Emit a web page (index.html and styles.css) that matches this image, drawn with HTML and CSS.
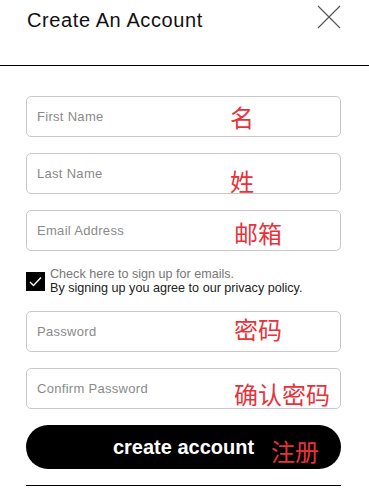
FILE: index.html
```html
<!DOCTYPE html>
<html lang="en">
<head>
<meta charset="UTF-8">
<meta name="viewport" content="width=device-width, initial-scale=1.0">
<title>Create An Account</title>
<link rel="stylesheet" href="styles.css">
</head>
<body>

<div class="header">
    <h1>Create An Account</h1>
    <button class="close" aria-label="Close">
        <svg width="24" height="24" viewBox="0 0 24 24"><path d="M1 1L23 23M23 1L1 23" stroke="#555" stroke-width="1.1" fill="none"/></svg>
    </button>
</div>

<form class="form">
    <div class="field">
        <input type="text" placeholder="First Name">
        <span class="note note-first">名</span>
    </div>
    <div class="field">
        <input type="text" placeholder="Last Name">
        <span class="note note-last">姓</span>
    </div>
    <div class="field">
        <input type="email" placeholder="Email Address">
        <span class="note note-email">邮箱</span>
    </div>
    <label class="optin">
        <span class="box">
            <svg width="13" height="11" viewBox="0 0 13 11"><path d="M1 6L4.5 9.5L12 1.5" stroke="#fff" stroke-width="1.4" fill="none"/></svg>
        </span>
        <span class="optin-text">
            <span class="line1">Check here to sign up for emails.</span>
            <span class="line2">By signing up you agree to our privacy policy.</span>
        </span>
    </label>
    <div class="field">
        <input type="password" placeholder="Password">
        <span class="note note-pass">密码</span>
    </div>
    <div class="field">
        <input type="password" placeholder="Confirm Password">
        <span class="note note-confirm">确认密码</span>
    </div>
    <div class="field">
        <button type="button" class="submit">create account</button>
        <span class="note note-submit">注册</span>
    </div>
    <div class="rule"></div>
</form>

</body>
</html>
```

FILE: styles.css
```css
body {
    margin: 0;
    padding: 0;
    font-family: "Liberation Sans", Arial, sans-serif;
    background-color: #fff;
}
.header {
    display: flex;
    justify-content: space-between;
    align-items: flex-start;
    height: 65px;
    border-bottom: 1px solid #000;
}
.header h1 {
    margin: 0;
    padding: 8px 0 0 27px;
    font-size: 20px;
    line-height: 24px;
    font-weight: normal;
    letter-spacing: 0.6px;
    color: #111;
}
.close {
    margin: 5px 28px 0 0;
    padding: 0;
    border: 0;
    background: none;
    width: 24px;
    height: 24px;
}
.form {
    display: flex;
    flex-direction: column;
    gap: 16px;
    padding: 30px 28px 0 26px;
}
.field {
    position: relative;
}
.field input {
    box-sizing: border-box;
    display: block;
    width: 100%;
    height: 41px;
    padding: 0 10px;
    border: 1px solid #c9c9c9;
    border-radius: 5px;
    font-family: "Liberation Sans", Arial, sans-serif;
    font-size: 13px;
    letter-spacing: 0.3px;
    color: #333;
}
.field input::placeholder {
    color: #8a8a8a;
}
.note {
    position: absolute;
    left: 204px;
    font-family: "Noto Sans CJK SC", sans-serif;
    font-size: 24px;
    line-height: 24px;
    color: #e8323a;
}
.note-first { top: 9px; }
.note-last { top: 16px; }
.note-email { top: 11px; left: 208px; }
.note-pass { top: 6px; left: 208px; }
.note-confirm { top: 14px; left: 208px; }
.note-submit { top: 14px; left: 245px; }
.optin {
    display: flex;
    gap: 5px;
    height: 28px;
}
.box {
    display: flex;
    align-items: center;
    justify-content: center;
    width: 19px;
    height: 19px;
    margin-top: 5px;
    background-color: #000;
}
.optin-text {
    display: flex;
    flex-direction: column;
    font-size: 12.6px;
    line-height: 14px;
}
.line1 {
    color: #777;
}
.line2 {
    color: #222;
}
.submit {
    display: block;
    width: 100%;
    height: 44px;
    border: 0;
    border-radius: 22px;
    background-color: #000;
    color: #fff;
    font-family: "Liberation Sans", Arial, sans-serif;
    font-size: 20px;
    font-weight: bold;
}
.rule {
    height: 1px;
    background-color: #000;
}
```
